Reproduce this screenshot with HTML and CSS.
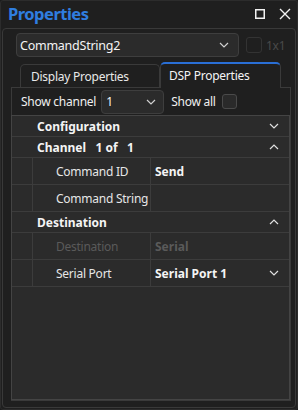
FILE: index.html
```html
<!DOCTYPE html>
<html>
<head>
<meta charset="utf-8">
<link rel="stylesheet" href="styles.css">
</head>
<body>
<div class="window">
  <div class="titlebar">
    <div class="title">Properties</div>
    <div class="win-icons">
      <svg class="ico-max" width="12" height="12" viewBox="0 0 12 12"><rect x="1.75" y="1.75" width="8.5" height="8.5" fill="none" stroke="#f2f2f2" stroke-width="1.5"/></svg>
      <svg class="ico-close" width="12" height="12" viewBox="0 0 12 12"><path d="M1 1 L11 11 M11 1 L1 11" stroke="#f2f2f2" stroke-width="1.4"/></svg>
    </div>
  </div>
  <div class="panel">
    <div class="top-row">
      <div class="combo main-combo">
        <span>CommandString2</span>
        <svg class="chev" width="10" height="6" viewBox="0 0 10 6"><path d="M1 1 L5 5 L9 1" fill="none" stroke="#d0d0d0" stroke-width="1.2"/></svg>
      </div>
      <div class="check disabled"></div>
      <span class="dim-label">1x1</span>
    </div>
    <div class="tabs">
      <div class="tab">Display Properties</div>
      <div class="tab active">DSP Properties</div>
    </div>
    <div class="pane">
      <div class="channel-row">
        <span class="lbl">Show channel</span>
        <div class="combo small-combo">
          <span>1</span>
          <svg class="chev" width="10" height="6" viewBox="0 0 10 6"><path d="M1 1 L5 5 L9 1" fill="none" stroke="#d0d0d0" stroke-width="1.2"/></svg>
        </div>
        <span class="lbl">Show all</span>
        <div class="check"></div>
      </div>
      <div class="grid">
        <div class="hdr">
          <span>Configuration</span>
          <svg class="gchev" width="10" height="6" viewBox="0 0 10 6"><path d="M1 1 L5 5 L9 1" fill="none" stroke="#e0e0e0" stroke-width="1.2"/></svg>
        </div>
        <div class="hdr">
          <span>Channel&nbsp;&nbsp;&nbsp;1 of&nbsp;&nbsp;&nbsp;1</span>
          <svg class="gchev" width="10" height="6" viewBox="0 0 10 6"><path d="M1 5 L5 1 L9 5" fill="none" stroke="#e0e0e0" stroke-width="1.2"/></svg>
        </div>
        <div class="prop">
          <div class="indent"></div>
          <div class="name">Command ID</div>
          <div class="val">Send</div>
        </div>
        <div class="prop">
          <div class="indent"></div>
          <div class="name">Command String</div>
          <div class="val"></div>
        </div>
        <div class="hdr">
          <span>Destination</span>
          <svg class="gchev" width="10" height="6" viewBox="0 0 10 6"><path d="M1 5 L5 1 L9 5" fill="none" stroke="#e0e0e0" stroke-width="1.2"/></svg>
        </div>
        <div class="prop disabled">
          <div class="indent"></div>
          <div class="name">Destination</div>
          <div class="val">Serial</div>
        </div>
        <div class="prop">
          <div class="indent"></div>
          <div class="name">Serial Port</div>
          <div class="val">Serial Port 1
            <svg class="gchev" width="10" height="6" viewBox="0 0 10 6"><path d="M1 1 L5 5 L9 1" fill="none" stroke="#e0e0e0" stroke-width="1.2"/></svg>
          </div>
        </div>
        <div class="grid-fill"></div>
      </div>
    </div>
  </div>
</div>
</body>
</html>
```
FILE: styles.css
```css
* { box-sizing: border-box; }
html, body { margin: 0; padding: 0; }
body {
  width: 298px;
  height: 410px;
  background: #1c1c1c;
  font-family: "Noto Sans", "Open Sans", sans-serif;
  font-size: 12px;
  letter-spacing: -0.25px;
  color: #f0f0f0;
  overflow: hidden;
  white-space: nowrap;
}
.window {
  width: 298px;
  height: 410px;
  display: flex;
  flex-direction: column;
  background: #1f1f1f;
  border: 1px solid #2c2c2c;
  border-radius: 3px;
}
.titlebar {
  height: 27px;
  flex: none;
  display: flex;
  align-items: center;
  justify-content: space-between;
  padding: 0 6px 0 7px;
}
.title {
  color: #2f7ee0;
  font-weight: bold;
  font-size: 16.5px;
  letter-spacing: -0.5px;
  margin-top: -2px;
}
.win-icons {
  display: flex;
  gap: 13px;
  align-items: center;
  margin-top: -1px;
}
.panel {
  flex: 1;
  margin: 0 1px 1px 1px;
  border: 1px solid #393939;
  border-radius: 4px;
  padding: 4px 3px 6px 8px;
  display: flex;
  flex-direction: column;
}
.top-row {
  display: flex;
  align-items: center;
  padding-left: 5px;
  height: 24px;
}
.combo {
  display: flex;
  align-items: center;
  justify-content: space-between;
  background: #2b2b2b;
  border: 1px solid #3e3e3e;
  border-radius: 4px;
  color: #f4f4f4;
}
.main-combo {
  width: 223px;
  height: 24px;
  padding: 0 9px 0 3px;
  font-size: 12.5px;
}
.check {
  width: 15px;
  height: 15px;
  border: 1px solid #4a4a4a;
  border-radius: 3px;
  background: #2a2a2a;
}
.check.disabled {
  border-color: #333;
  background: #1f1f1f;
  margin-left: 7px;
  width: 16px;
  height: 16px;
}
.dim-label {
  color: #4a4a4a;
  margin-left: 4px;
  font-size: 12px;
}
.tabs {
  display: flex;
  align-items: flex-end;
  padding-left: 9px;
  margin-top: 5px;
  height: 26px;
  position: relative;
  z-index: 1;
  margin-bottom: -1px;
}
.tab {
  height: 23px;
  width: 140px;
  border: 1px solid #3a3a3a;
  border-bottom: none;
  border-radius: 5px 5px 0 0;
  display: flex;
  align-items: center;
  padding-left: 10px;
  color: #e8e8e8;
  background: #1f1f1f;
  margin-bottom: 1px;
}
.tab.active {
  width: 121px;
  height: 26px;
  margin-bottom: 0;
  border-top: 2px solid #2a6fd6;
  padding-left: 8px;
  padding-bottom: 2px;
  background: #1f1f1f;
  color: #f4f4f4;
}
.pane {
  flex: 1;
  border: 1px solid #3a3a3a;
  display: flex;
  flex-direction: column;
  background: #1f1f1f;
  margin-right: 1px;
}
.channel-row {
  height: 27px;
  display: flex;
  align-items: center;
  padding-left: 9px;
  flex: none;
}
.lbl { color: #f0f0f0; }
.small-combo {
  width: 63px;
  height: 24px;
  margin: 0 7px 0 5px;
  padding: 0 7px 0 4px;
}
.channel-row .check { margin-left: 6px; }
.grid {
  flex: 1;
  background: #2b2b2b;
  border: 1px solid #444;
  margin: 0 0 0 -1px;
  display: flex;
  flex-direction: column;
}
.hdr {
  height: 21px;
  flex: none;
  display: flex;
  align-items: center;
  justify-content: space-between;
  padding: 0 10px 0 25px;
  font-weight: bold;
  font-size: 12px;
  letter-spacing: 0;
  color: #f4f4f4;
  border-bottom: 1px solid #3c3c3c;
}
.prop {
  height: 27px;
  flex: none;
  display: flex;
  border-bottom: 1px solid #3c3c3c;
}
.indent {
  width: 21px;
  border-right: 1px solid #3c3c3c;
}
.name {
  width: 118px;
  border-right: 1px solid #3c3c3c;
  display: flex;
  align-items: center;
  padding-left: 23px;
  color: #e6e6e6;
  overflow: hidden;
}
.val {
  flex: 1;
  display: flex;
  align-items: center;
  justify-content: space-between;
  padding: 0 10px 0 4px;
  font-weight: bold;
  letter-spacing: 0;
  color: #f4f4f4;
}
.prop.disabled .name, .prop.disabled .val { color: #5a5a5a; }
.grid-fill { flex: 1; }
```
